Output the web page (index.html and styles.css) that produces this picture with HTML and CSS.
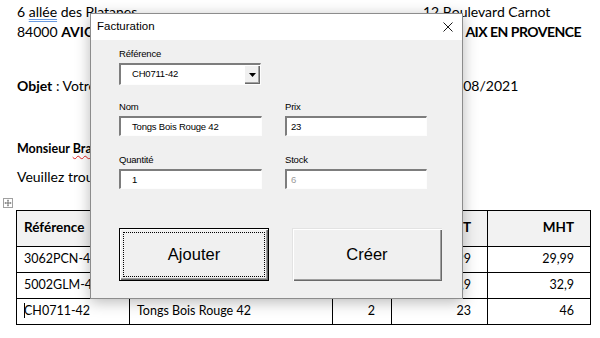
FILE: index.html
```html
<!DOCTYPE html>
<html lang="fr">
<head>
<meta charset="utf-8">
<title>Facturation</title>
<link rel="stylesheet" href="styles.css">
</head>
<body>
<div class="doc">
  <div class="addr">
    <div>6 <span class="gram">allée</span> des Platanes</div>
    <div>12 Boulevard Carnot</div>
    <div>84000 <b>AVIGNON</b></div>
    <div class="city">13100 <b class="tight">AIX EN PROVENCE</b></div>
  </div>
  <div class="addr objet">
    <div><b>Objet</b> : Votre facture</div>
    <div>Le 10/08/2021</div>
  </div>
  <p class="salut"><b>Monsieur <span class="spell">Bramouille</span></b></p>
  <p class="intro">Veuillez trouver ci-dessous le détail de votre commande.</p>
  <div class="handle">
    <svg width="10" height="10" viewBox="0 0 10 10">
      <rect x="0.5" y="0.5" width="9" height="9" fill="#fff" stroke="#a0a0a0"/>
      <path d="M5 2.2V7.8M2.2 5H7.8" stroke="#555" stroke-width="0.8" fill="none"/>
      <path d="M5 1.4L3.9 2.6H6.1Z M5 8.6L3.9 7.4H6.1Z M1.4 5L2.6 3.9V6.1Z M8.6 5L7.4 3.9V6.1Z" fill="#555"/>
    </svg>
  </div>
  <table class="grid">
    <colgroup>
      <col class="c1"><col class="c2"><col class="c3"><col class="c4"><col class="c5">
    </colgroup>
    <tr class="head"><th>Référence</th><th>Désignation</th><th class="num">Qté</th><th class="num">PUHT</th><th class="num">MHT</th></tr>
    <tr><td>3062PCN-42</td><td>Sandales Cuir Noir 42</td><td class="num">1</td><td class="num">29,99</td><td class="num">29,99</td></tr>
    <tr><td>5002GLM-42</td><td>Baskets Toile Marine 42</td><td class="num">1</td><td class="num">32,9</td><td class="num">32,9</td></tr>
    <tr><td><span class="caret"></span>CH0711-42</td><td>Tongs Bois Rouge 42</td><td class="num">2</td><td class="num">23</td><td class="num">46</td></tr>
  </table>
</div>

<div class="dialog">
  <div class="titlebar">
    <span>Facturation</span>
    <svg class="close" width="10" height="10" viewBox="0 0 10 10"><path d="M0.5 0.5L9.5 9.5M9.5 0.5L0.5 9.5" stroke="#1a1a1a" stroke-width="1" fill="none"/></svg>
  </div>
  <div class="dbody">
    <div class="field">
      <label>Référence</label>
      <div class="combo">
        <span class="combo-val">CH0711-42</span>
        <span class="combo-btn"><svg width="7" height="4" viewBox="0 0 7 4"><path d="M0 0H7L3.5 4Z" fill="#000"/></svg></span>
      </div>
    </div>
    <div class="fields2">
      <div class="field"><label>Nom</label><div class="tb">Tongs Bois Rouge 42</div></div>
      <div class="field"><label>Prix</label><div class="tb tb-r">23</div></div>
      <div class="field"><label>Quantité</label><div class="tb">1</div></div>
      <div class="field"><label>Stock</label><div class="tb tb-r tb-dis">6</div></div>
    </div>
    <div class="buttons">
      <button class="btn btn-def">Ajouter</button>
      <button class="btn">Créer</button>
    </div>
  </div>
</div>
</body>
</html>
```

FILE: styles.css
```css
html, body {
  margin: 0;
  padding: 0;
}
body {
  width: 600px;
  height: 338px;
  overflow: hidden;
  background: #fff;
  color: #000;
  font-family: Lato, "Liberation Sans", sans-serif;
  font-size: 14px;
  line-height: 19.5px;
}
.doc {
  padding: 2px 0 0 17px;
}
.addr {
  display: grid;
  grid-template-columns: 406px 1fr;
}
.city {
  letter-spacing: -0.3px;
}
.tight {
  letter-spacing: -0.5px;
}
.objet {
  margin-top: 35px;
}
.gram {
  text-decoration: underline double #6b9be0;
  text-underline-offset: 2px;
}
.salut {
  margin: 43px 0 0;
  font-size: 12.5px;
}
.spell {
  text-decoration: underline wavy #e02020;
  text-decoration-thickness: 1px;
  text-underline-offset: 2px;
}
.intro {
  margin: 9px 0 0;
}
.handle {
  margin: 11px 0 0 -14px;
  height: 10px;
  line-height: 0;
}
.grid {
  margin: 2px 0 0 -1px;
  border-collapse: collapse;
  table-layout: fixed;
  width: 574px;
  font-size: 12.5px;
}
.c1 { width: 113px; }
.c2 { width: 203px; }
.c3 { width: 59px; }
.c4 { width: 96px; }
.c5 { width: 103px; }
.grid th, .grid td {
  border: 1px solid #000;
  padding: 0 8px 0 7px;
  text-align: left;
  white-space: nowrap;
  overflow: hidden;
}
.grid th {
  height: 35px;
  font-size: 13.5px;
  font-weight: 700;
  background: #f2f2f2;
}
.grid td {
  height: 25px;
}
.grid .num {
  text-align: right;
  padding-right: 16px;
}
.caret {
  display: inline-block;
  width: 1px;
  height: 15px;
  background: #000;
  vertical-align: -3px;
  margin-right: -1px;
}

/* dialog */
.dialog {
  position: absolute;
  left: 90px;
  top: 13px;
  width: 373px;
  height: 286px;
  box-sizing: border-box;
  border: 1px solid #8c8c8c;
  background: #f0f0f0;
  box-shadow: 0 3px 14px rgba(0, 0, 0, 0.28);
  display: flex;
  flex-direction: column;
  font-family: "Liberation Sans", Arial, sans-serif;
  color: #000;
}
.titlebar {
  height: 26px;
  flex: none;
  background: #fff;
  display: flex;
  align-items: center;
  justify-content: space-between;
  padding: 0 9px 0 6px;
  font-size: 11.5px;
}
.dbody {
  padding: 8px 0 0 28px;
  font-size: 9.5px;
  letter-spacing: -0.2px;
}
.field label {
  display: block;
  line-height: 12px;
  margin-bottom: 3px;
}
.combo {
  width: 142px;
  height: 22px;
  box-sizing: border-box;
  border-style: solid;
  border-width: 2px 1px 1px 2px;
  border-color: #7d7d7d #fdfdfd #fdfdfd #7d7d7d;
  background: #fff;
  display: flex;
}
.combo-val {
  flex: 1;
  padding-left: 11px;
  line-height: 17px;
}
.combo-btn {
  width: 16px;
  background: #f0f0f0;
  display: flex;
  align-items: center;
  justify-content: center;
  box-shadow: inset 1px 1px #fff, inset -1px -1px #696969, inset -2px -2px #a0a0a0;
}
.fields2 {
  margin-top: 16px;
  display: grid;
  grid-template-columns: 143px 142px;
  column-gap: 23px;
  row-gap: 18px;
}
.tb {
  height: 20px;
  box-sizing: border-box;
  border-style: solid;
  border-width: 2px 1px 1px 2px;
  border-color: #7d7d7d #fdfdfd #fdfdfd #7d7d7d;
  background: #fff;
  padding-left: 11px;
  line-height: 17px;
}
.tb-r {
  padding-left: 4px;
}
.tb-dis {
  color: #9a9a9a;
}
.buttons {
  margin-top: 39px;
  display: grid;
  grid-template-columns: 150px 150px;
  column-gap: 23px;
}
.btn {
  height: 53px;
  margin: 0;
  padding: 0;
  border: 0;
  background: #f0f0f0;
  color: #000;
  font-family: "Liberation Sans", Arial, sans-serif;
  font-size: 16.5px;
  box-shadow: inset 1px 1px #e3e3e3, inset 2px 2px #fff, inset -1px -1px #696969, inset -2px -2px #a0a0a0;
}
.btn-def {
  border: 1px solid #000;
  box-shadow: inset 1px 1px #fff, inset -1px -1px #696969, inset -2px -2px #a0a0a0;
  outline: 1px dotted #000;
  outline-offset: -5px;
}
```
